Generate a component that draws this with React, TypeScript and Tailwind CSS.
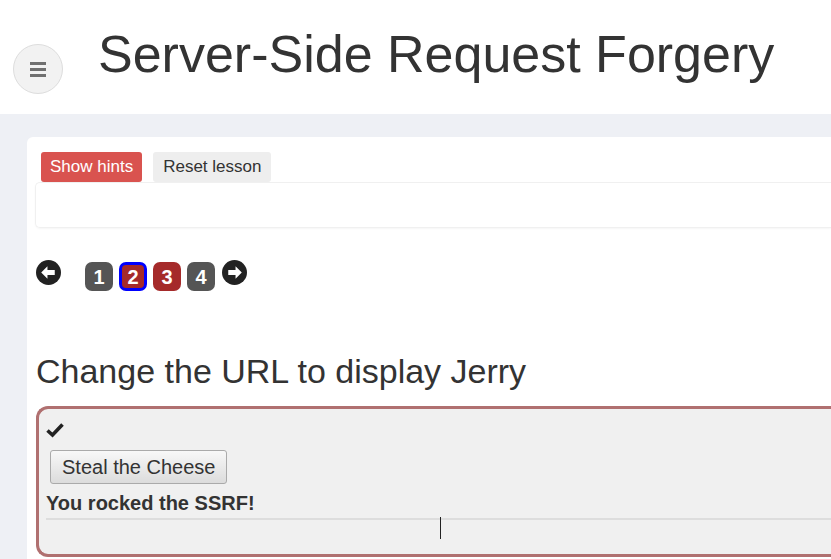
function ArrowCircle({ dir }: { dir: 'left' | 'right' }) {
  return (
    <svg width="25" height="25" viewBox="0 0 24 24">
      <circle cx="12" cy="12" r="12" fill="#222" />
      {dir === 'left' ? (
        <path d="M5 12 L11 6 V9.5 H18 V14.5 H11 V18 Z" fill="#fff" />
      ) : (
        <path d="M19 12 L13 6 V9.5 H6 V14.5 H13 V18 Z" fill="#fff" />
      )}
    </svg>
  );
}

const PAGES = [
  { n: 1, bg: 'bg-[#555]', active: false },
  { n: 2, bg: 'bg-[#a52a2a]', active: true },
  { n: 3, bg: 'bg-[#a52a2a]', active: false },
  { n: 4, bg: 'bg-[#555]', active: false },
];

export default function App() {
  return (
    <div className="w-[831px] h-[559px] overflow-hidden bg-[#eef0f5] font-['Liberation_Sans',Arial,sans-serif] text-[#333]">
      {/* Header */}
      <header className="h-[114px] bg-white flex items-start">
        <button className="ml-[13px] mt-[44px] w-[50px] h-[50px] rounded-full bg-[#f2f2f2] border border-[#ddd] flex flex-col items-center justify-center gap-[3px]">
          <span className="block w-[16px] h-[3px] bg-[#707070]" />
          <span className="block w-[16px] h-[3px] bg-[#707070]" />
          <span className="block w-[16px] h-[3px] bg-[#707070]" />
        </button>
        <h1 className="ml-[35px] mt-[28px] text-[52px] leading-none whitespace-nowrap text-[#333]">
          Server-Side Request Forgery
        </h1>
      </header>

      {/* Content */}
      <div className="pl-[27px] pt-[23px]">
        <div className="bg-white rounded-tl-[6px] h-[460px] pt-[15px]">
          <div className="pl-[8px]">
            <div className="flex gap-[11px] pl-[6px] relative z-10">
              <button className="h-[30px] px-[9px] rounded-[3px] bg-[#d9534f] text-white text-[17px]">Show hints</button>
              <button className="h-[30px] px-[10px] rounded-[3px] bg-[#eee] text-[#333] text-[17px]">Reset lesson</button>
            </div>
            <div className="h-[46px] border border-[#f0f0f0] border-r-0 rounded-l-[5px] shadow-[0_1px_2px_rgba(0,0,0,0.04)]" />
          </div>

          {/* Page nav */}
          <div className="flex items-start mt-[32px] pl-[9px]">
            <ArrowCircle dir="left" />
            <div className="flex gap-[6px] ml-[24px] mt-[2px]">
              {PAGES.map((p) => (
                <div
                  key={p.n}
                  className={`w-[28px] h-[29px] rounded-[7px] ${p.bg} text-white font-bold text-[20px] flex items-center justify-center ${p.active ? 'border-[3px] border-[#0000ff]' : ''}`}
                >
                  {p.n}
                </div>
              ))}
            </div>
            <div className="ml-[7px]"><ArrowCircle dir="right" /></div>
          </div>

          <h2 className="mt-[63px] pl-[9px] text-[34px] leading-none text-[#333]">Change the URL to display Jerry</h2>

          <div className="ml-[9px] mt-[18px] h-[151px] border-[3px] border-r-0 border-[#b07070] rounded-l-[12px] bg-[#f0f0f0] pl-[7px] pt-[13px]">
            <svg width="18" height="16" viewBox="0 0 18 16" className="block">
              <path d="M1.5 8.5 L6.5 13 L16.5 2.5" fill="none" stroke="#222" strokeWidth="3.6" strokeLinejoin="miter" />
            </svg>
            <button className="mt-[12px] ml-[4px] h-[34px] px-[11px] border border-[#aaa] rounded-[3px] bg-gradient-to-b from-[#f8f8f8] to-[#dcdcdc] text-[20px] text-[#333]">
              Steal the Cheese
            </button>
            <div className="mt-[8px] font-bold text-[20px] text-[#333] leading-[22px]">You rocked the SSRF!</div>
            <div className="mt-[4px] border-t-[2px] border-[#ddd]" />
            <div className="ml-[394px] -mt-[3px] w-[1px] h-[22px] bg-[#222]" />
          </div>
        </div>
      </div>
    </div>
  );
}
